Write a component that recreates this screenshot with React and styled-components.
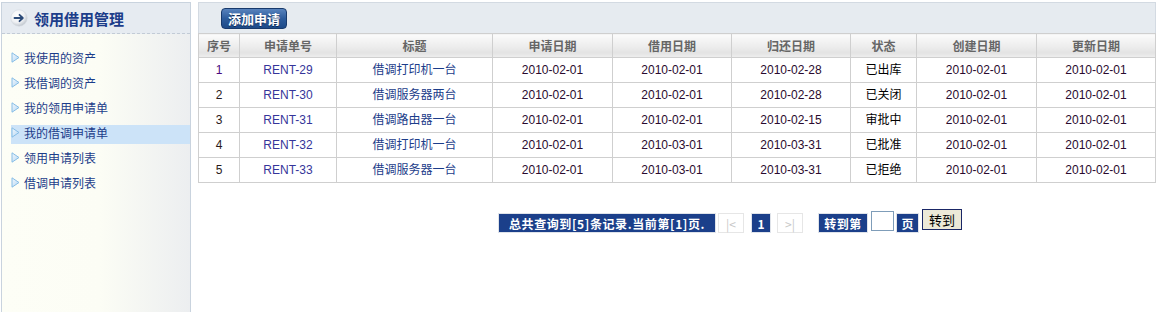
import React from "react";
import styled, { createGlobalStyle } from "styled-components";

const GlobalStyle = createGlobalStyle`
  body {
    margin: 0;
    background: #fff;
    font-family: "Liberation Sans", Arial, "Noto Sans CJK SC", sans-serif;
    font-size: 12px;
  }
`;

const Page = styled.div`
  display: flex;
  height: 312px;
  padding: 2px 0 0 1px;
  box-sizing: border-box;
  overflow: hidden;
`;

const Sidebar = styled.div`
  width: 190px;
  flex-shrink: 0;
  display: flex;
  flex-direction: column;
  border: 1px solid #c9d3de;
  border-bottom: none;
  box-sizing: border-box;
  background: linear-gradient(to right, #fdfef6 0%, #fcfdf5 52%, #eceef0 100%);
`;

const SideHead = styled.div`
  height: 30px;
  display: flex;
  align-items: center;
  gap: 6px;
  padding-left: 8px;
  background: #e6ebf1;
  border-bottom: 1px dashed #c2cbd6;
`;

const SideTitle = styled.span`
  font-family: "Noto Sans CJK SC", sans-serif;
  font-size: 15px;
  font-weight: bold;
  color: #1c3d8a;
`;

const Menu = styled.div`
  display: flex;
  flex-direction: column;
  gap: 6px;
  padding-top: 16px;
`;

const MenuItem = styled.div`
  height: 19px;
  line-height: 15px;
  margin-left: 9px;
  display: flex;
  align-items: flex-start;
  gap: 4px;
  font-family: "Noto Sans CJK SC", sans-serif;
  font-size: 12px;
  color: #1c3d8a;
  background: ${(p) => (p.$active ? "#cce3f8" : "transparent")};

  svg {
    margin-top: 2px;
    flex-shrink: 0;
  }
`;

const Main = styled.div`
  flex: 1;
  margin-left: 7px;
  display: flex;
  flex-direction: column;
`;

const Toolbar = styled.div`
  height: 31px;
  box-sizing: border-box;
  background: #e6ebf0;
  border: 1px solid #d3dae2;
  border-bottom: none;
  padding: 5px 0 0 22px;
`;

const AddButton = styled.button`
  height: 21px;
  width: 66px;
  padding: 0;
  border: 1px solid #183a6c;
  border-radius: 4px;
  background: linear-gradient(to bottom, #5883bd 0%, #2d5c9c 50%, #1d4a88 100%);
  color: #fff;
  font-family: "Noto Sans CJK SC", sans-serif;
  font-size: 13px;
  font-weight: bold;
  line-height: 19px;
  text-shadow: 0 1px 0 #0e2a55;
`;

const Table = styled.table`
  border-collapse: collapse;
  width: 100%;
  table-layout: fixed;
`;

const Th = styled.th`
  height: 23px;
  padding: 0;
  line-height: 14px;
  border: 1px solid #cfcfcf;
  background: linear-gradient(to bottom, #fbfbfb 0%, #ececec 55%, #e3e3e3 80%, #efefef 100%);
  font-family: "Noto Sans CJK SC", sans-serif;
  font-size: 12px;
  font-weight: bold;
  color: #666;
`;

const Td = styled.td`
  height: 24px;
  padding: 0;
  line-height: 14px;
  border: 1px solid #cfcfcf;
  text-align: center;
  font-size: 12px;
  color: ${(p) => p.$color || "#2a0a2e"};
  font-family: ${(p) =>
    p.$cjk ? `"Noto Sans CJK SC", sans-serif` : `"Liberation Sans", Arial, sans-serif`};
  vertical-align: middle;
`;

const CjkText = styled.span`
  display: inline-block;
  transform: translateY(-1px);
`;

const Pager = styled.div`
  display: flex;
  align-items: center;
  padding: 28px 0 0 300px;
  height: 24px;
`;

const Box = styled.div`
  height: 20px;
  width: ${(p) => p.$w}px;
  margin-left: ${(p) => p.$ml || 0}px;
  box-sizing: border-box;
  display: flex;
  align-items: center;
  justify-content: center;
  font-family: "Noto Sans CJK SC", sans-serif;
  font-size: 12px;
  letter-spacing: ${(p) => p.$ls || 0}px;
  white-space: nowrap;
  background: ${(p) => (p.$light ? "#fff" : "#1b3f8a")};
  color: ${(p) => (p.$light ? "#c8c8c8" : "#fff")};
  border: 1px solid ${(p) => (p.$light ? "#e6e6e6" : "#dfe3ea")};
  font-weight: ${(p) => (p.$light ? "normal" : "bold")};
  align-self: ${(p) => p.$self || "center"};
`;

const PageInput = styled.input`
  width: 23px;
  height: 20px;
  box-sizing: border-box;
  margin: 0 0 0 3px;
  padding: 0;
  border: 1px solid #7f9db9;
  background: #fff;
  align-self: flex-start;
`;

const GoButton = styled.button`
  width: 40px;
  height: 21px;
  margin-left: 3px;
  padding: 0;
  border: 1px solid #1a2766;
  background: #ece9d8;
  color: #000;
  font-family: "Noto Sans CJK SC", sans-serif;
  font-size: 13px;
  line-height: 17px;
  align-self: flex-start;
  margin-top: -2px;
`;

const ArrowIcon = () => (
  <svg width="18" height="18" viewBox="0 0 18 18">
    <defs>
      <radialGradient id="ag" cx="40%" cy="35%" r="70%">
        <stop offset="0%" stopColor="#ffffff" />
        <stop offset="60%" stopColor="#eef0f3" />
        <stop offset="100%" stopColor="#b9c0c8" />
      </radialGradient>
    </defs>
    <circle cx="9" cy="9" r="8.2" fill="url(#ag)" stroke="#d4d9df" strokeWidth="0.6" />
    <path d="M4.5 9 H12.5 M9.5 5.8 L12.8 9 L9.5 12.2" stroke="#2b4a78" strokeWidth="1.8" fill="none" strokeLinecap="round" strokeLinejoin="round" />
  </svg>
);

const TriIcon = () => (
  <svg width="9" height="11" viewBox="0 0 9 11">
    <defs>
      <linearGradient id="tg" x1="0" y1="0" x2="1" y2="1">
        <stop offset="0%" stopColor="#f2f8fe" />
        <stop offset="100%" stopColor="#b5d6f2" />
      </linearGradient>
    </defs>
    <polygon points="1,0.8 8,5.5 1,10.2" fill="url(#tg)" stroke="#86bde6" strokeWidth="1" strokeLinejoin="round" />
  </svg>
);

const menu = ["我使用的资产", "我借调的资产", "我的领用申请单", "我的借调申请单", "领用申请列表", "借调申请列表"];

const cols = [41, 97, 156, 120, 119, 119, 66, 120, 119];
const heads = ["序号", "申请单号", "标题", "申请日期", "借用日期", "归还日期", "状态", "创建日期", "更新日期"];

const rows = [
  ["1", "RENT-29", "借调打印机一台", "2010-02-01", "2010-02-01", "2010-02-28", "已出库"],
  ["2", "RENT-30", "借调服务器两台", "2010-02-01", "2010-02-01", "2010-02-28", "已关闭"],
  ["3", "RENT-31", "借调路由器一台", "2010-02-01", "2010-02-01", "2010-02-15", "审批中"],
  ["4", "RENT-32", "借调打印机一台", "2010-02-01", "2010-03-01", "2010-03-31", "已批准"],
  ["5", "RENT-33", "借调服务器一台", "2010-02-01", "2010-03-01", "2010-03-31", "已拒绝"],
];

export default function App() {
  return (
    <>
      <GlobalStyle />
      <Page>
        <Sidebar>
          <SideHead>
            <ArrowIcon />
            <SideTitle>领用借用管理</SideTitle>
          </SideHead>
          <Menu>
            {menu.map((m, i) => (
              <MenuItem key={m} $active={i === 3}>
                <TriIcon />
                <span>{m}</span>
              </MenuItem>
            ))}
          </Menu>
        </Sidebar>
        <Main>
          <Toolbar>
            <AddButton>添加申请</AddButton>
          </Toolbar>
          <Table>
            <colgroup>
              {cols.map((w, i) => (
                <col key={i} style={{ width: w }} />
              ))}
            </colgroup>
            <thead>
              <tr>
                {heads.map((h) => (
                  <Th key={h}>{h}</Th>
                ))}
              </tr>
            </thead>
            <tbody>
              {rows.map((r) => (
                <tr key={r[0]}>
                  <Td $color={r[0] === "1" ? "#4a0a80" : "#2a1a1a"}>{r[0]}</Td>
                  <Td $color="#35359a">{r[1]}</Td>
                  <Td $cjk $color="#1c3d8a"><CjkText>{r[2]}</CjkText></Td>
                  <Td>{r[3]}</Td>
                  <Td>{r[4]}</Td>
                  <Td>{r[5]}</Td>
                  <Td $cjk $color="#000"><CjkText>{r[6]}</CjkText></Td>
                  <Td>2010-02-01</Td>
                  <Td>2010-02-01</Td>
                </tr>
              ))}
            </tbody>
          </Table>
          <Pager>
            <Box $w={218} $ls={0.6} $self="flex-start" style={{ marginTop: 2 }}>总共查询到[5]条记录.当前第[1]页.</Box>
            <Box $w={26} $ml={2} $light>|&lt;</Box>
            <Box $w={20} $ml={7}>1</Box>
            <Box $w={26} $ml={6} $light>&gt;|</Box>
            <Box $w={50} $ml={15} $ls={0.5}>转到第</Box>
            <PageInput />
            <Box $w={23} $ml={2}>页</Box>
            <GoButton>转到</GoButton>
          </Pager>
        </Main>
      </Page>
    </>
  );
}
